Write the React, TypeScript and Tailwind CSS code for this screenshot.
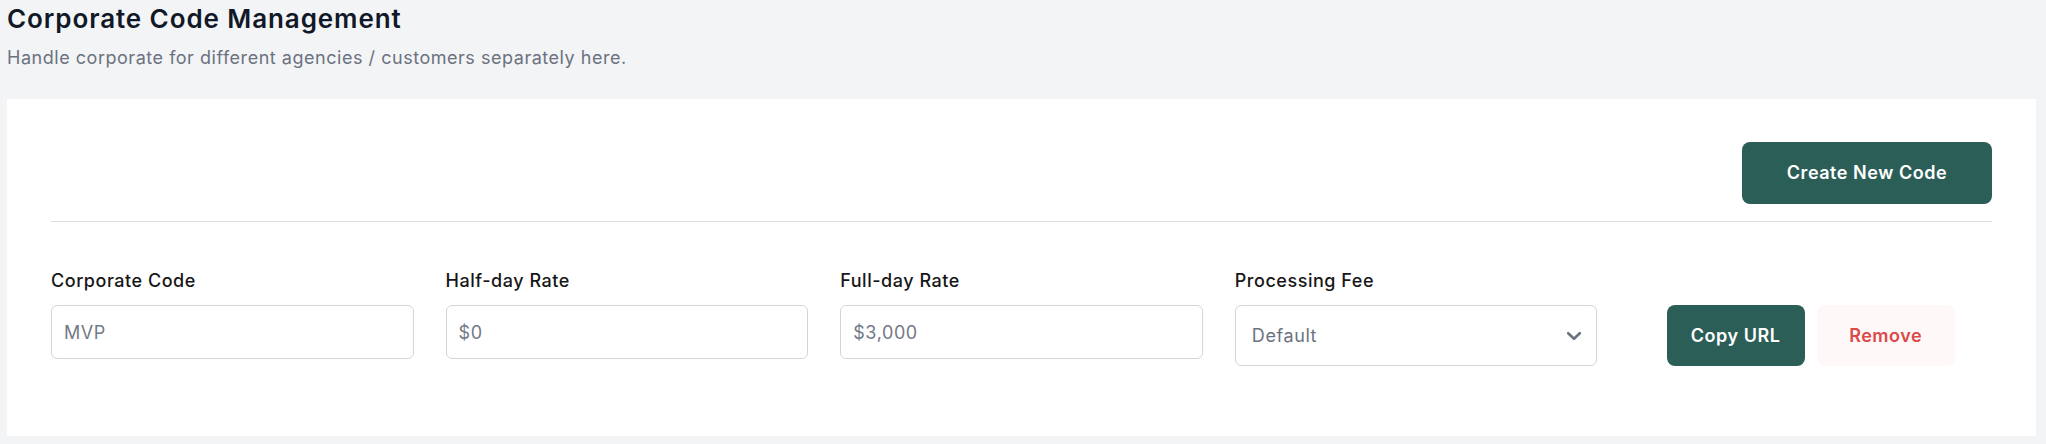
import React from "react";

function Field({ label, placeholder }: { label: string; placeholder: string }) {
  return (
    <div className="flex flex-col">
      <label className="text-lg font-medium leading-7 text-[#171717]">{label}</label>
      <input
        type="text"
        placeholder={placeholder}
        className="mt-2.5 h-[54px] w-full rounded-md border border-[#d4d5da] bg-white px-3 text-lg tracking-[0.033em] text-[#111827] outline-none placeholder:text-[#737986]"
      />
    </div>
  );
}

export default function App() {
  return (
    <div
      className="min-h-screen bg-[#f3f4f6] pl-[7px] pr-[10px] pt-[3px] tracking-[0.033em]"
      style={{ fontFamily: "Inter, 'Noto Sans', sans-serif" }}
    >
      <h1 className="text-[26px] font-semibold leading-8 tracking-[0.035em] text-[#111827]">
        Corporate Code Management
      </h1>
      <p className="mt-[9px] text-lg leading-7 text-[#6b7280]">
        Handle corporate for different agencies / customers separately here.
      </p>

      <div className="mt-[27px] bg-white px-11 pb-[70px] pt-[43px]">
        <div className="flex justify-end">
          <button className="h-[62px] w-[250px] rounded-lg bg-[#2c5e58] text-lg font-semibold tracking-[0.03em] text-white">
            Create New Code
          </button>
        </div>
        <div className="mt-[17px] h-px bg-[#dcdde0]" />

        <div className="mt-[45px] grid grid-cols-5 gap-x-8">
          <Field label="Corporate Code" placeholder="MVP" />
          <Field label="Half-day Rate" placeholder="$0" />
          <Field label="Full-day Rate" placeholder="$3,000" />
          <div className="flex flex-col">
            <label className="text-lg font-medium leading-7 text-[#171717]">Processing Fee</label>
            <div className="relative mt-2.5 h-[61px] w-full">
              <select
                defaultValue="default"
                className="h-full w-full appearance-none rounded-md border border-[#d4d5da] bg-white pl-4 pr-10 text-lg tracking-[0.033em] text-[#6b7280] outline-none"
              >
                <option value="default">Default</option>
              </select>
              <svg
                className="pointer-events-none absolute right-[15px] top-1/2 -translate-y-1/2"
                width="16"
                height="10"
                viewBox="0 0 16 10"
                fill="none"
              >
                <path d="M2.2 2.2L8 7.8l5.8-5.6" stroke="#6b7280" strokeWidth="2.6" strokeLinecap="round" strokeLinejoin="round" />
              </svg>
            </div>
          </div>
          <div className="flex items-start justify-center gap-3 pt-[38px]">
            <button className="h-[61px] w-[138px] rounded-lg bg-[#2c5e58] text-lg font-semibold tracking-[0.03em] text-white">
              Copy URL
            </button>
            <button className="h-[61px] w-[138px] rounded-lg bg-[#fef8f8] text-lg font-semibold tracking-[0.03em] text-[#dc4a4a]">
              Remove
            </button>
          </div>
        </div>
      </div>
    </div>
  );
}
